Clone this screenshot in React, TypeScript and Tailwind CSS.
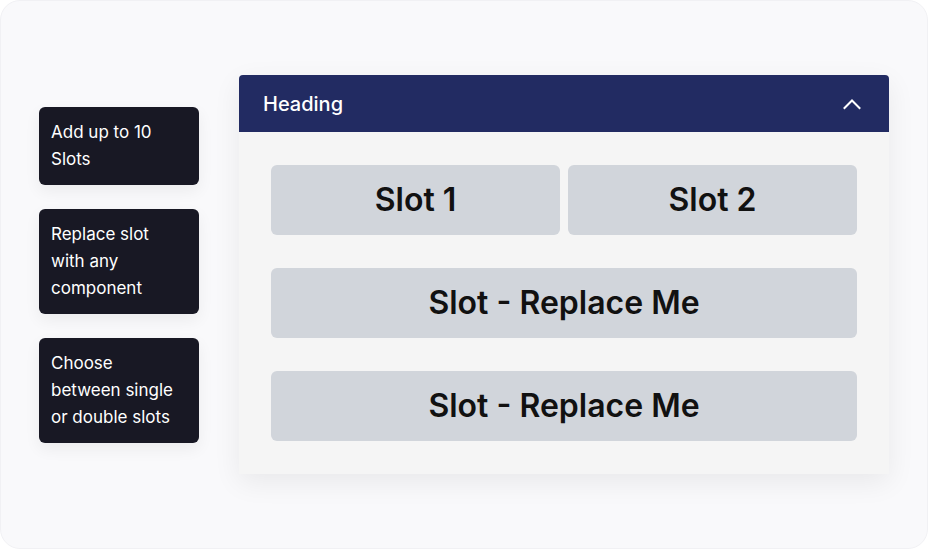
import React from 'react';

const notes = [
  'Add up to 10 Slots',
  'Replace slot with any component',
  'Choose between single or double slots',
];

const Slot: React.FC<{ label: string; half?: boolean }> = ({ label, half }) => (
  <div
    className={`flex h-[70px] items-center justify-center rounded-md bg-[#d1d5db] text-[32px] font-semibold text-[#111111] ${
      half ? 'flex-1' : 'w-full'
    }`}
  >
    {label}
  </div>
);

const App: React.FC = () => {
  return (
    <div
      className="h-[549px] w-[928px] bg-white"
      style={{ fontFamily: 'Inter, "Noto Sans", sans-serif' }}
    >
      <div className="flex h-full items-center rounded-[20px] border border-[#f1f1f4] bg-[#f9f9fb] pl-[38px]">
        <div className="flex w-[160px] shrink-0 flex-col gap-6">
          {notes.map((note) => (
            <div
              key={note}
              className="rounded-md bg-[#181824] py-3 pl-3 pr-5 text-[17px] leading-[27px] text-white shadow-[0_6px_16px_rgba(0,0,0,0.06)]"
            >
              {note}
            </div>
          ))}
        </div>

        <div className="ml-10 w-[650px] shrink-0 overflow-hidden rounded-t bg-[#f5f5f5] shadow-[0_8px_28px_rgba(0,0,0,0.07)]">
          <div className="flex h-[57px] items-center justify-between bg-[#222b62] pl-6 pr-7">
            <span className="text-[20px] font-medium text-white">Heading</span>
            <svg width="18" height="12" viewBox="0 0 18 12" fill="none">
              <polyline
                points="1.5,10 9,2.5 16.5,10"
                stroke="white"
                strokeWidth="2"
                strokeLinecap="square"
              />
            </svg>
          </div>
          <div className="flex flex-col gap-[33px] px-8 py-[33px]">
            <div className="flex gap-2">
              <Slot label="Slot 1" half />
              <Slot label="Slot 2" half />
            </div>
            <Slot label="Slot - Replace Me" />
            <Slot label="Slot - Replace Me" />
          </div>
        </div>
      </div>
    </div>
  );
};

export default App;
